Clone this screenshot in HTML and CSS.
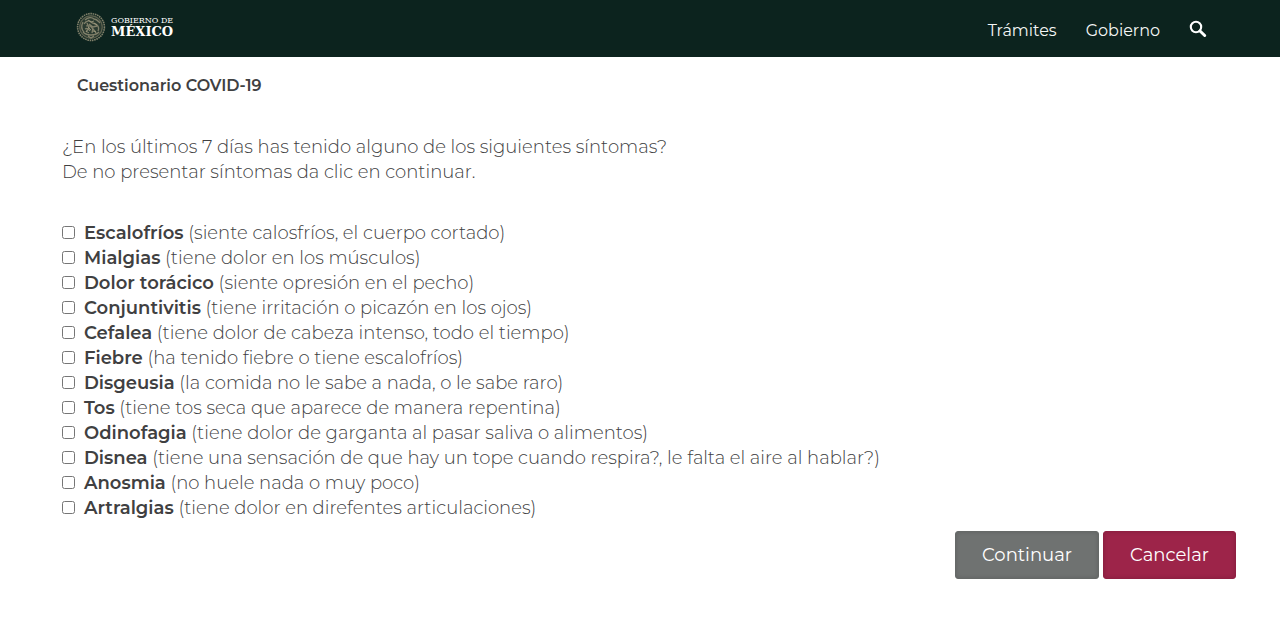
FILE: index.html
```
<!DOCTYPE html>
<html lang="es">
<head>
<meta charset="utf-8">
<meta name="viewport" content="width=device-width, initial-scale=1">
<title>Cuestionario COVID-19</title>
<link rel="stylesheet" href="styles.css">
</head>
<body>
<header class="topbar">
  <a class="brand" href="#">
    <svg class="seal" viewBox="0 0 30 30" aria-hidden="true">
      <circle cx="15" cy="15" r="12" fill="#2b3b31"/>
      <g fill="none" stroke="#81806a">
        <circle cx="15" cy="15" r="13.4" stroke-width="1.6" stroke-dasharray="1.6 .7"/>
        <circle cx="15" cy="15" r="11.2" stroke="#5d614f" stroke-width="1.2"/>
        <path stroke-width="1.3" d="M9 8c3-3 7-3 9-1 3 0 4 2 6 4M8 12c2-3 5-4 7-2s4 1 6 3 2 4 1 6M7 10c-2 4-1 8 1 10M10 14c3-1 5 0 6 2s3 2 4 5M9 17c2-1 4 0 5 2M13 12l4 3 4-1M11 11l2 5-3 4M17 16l-1 5M7 20c4 4 12 4 16 0M10 22c3 1 7 1 10 0M12 24l3 2 3-2"/>
        <path stroke="#a19d80" stroke-width=".8" d="M12 8l3 2 3-1M18 11l3 2M12 15l3 3M17 19l3 1M10 19l3 2"/>
      </g>
    </svg>
    <span class="brand-text"><span class="brand-small">GOBIERNO DE</span><span class="brand-large">MÉXICO</span></span>
  </a>
  <nav class="nav">
    <a href="#">Trámites</a>
    <a href="#">Gobierno</a>
    <a class="search" href="#" aria-label="Buscar">
      <svg viewBox="0 0 18 18" aria-hidden="true"><circle cx="7" cy="7" r="5.2" fill="none" stroke="#fff" stroke-width="2.1"/><path d="M11 11l4.7 4.5" stroke="#fff" stroke-width="3" stroke-linecap="round"/></svg>
    </a>
  </nav>
</header>
<main class="page">
  <h1 class="title">Cuestionario COVID-19</h1>
  <form class="survey">
    <p class="question">¿En los últimos 7 días has tenido alguno de los siguientes síntomas?<br>De no presentar síntomas da clic en continuar.</p>
    <div class="symptoms">
      <label class="symptom"><input type="checkbox"><span><b>Escalofríos</b> (siente calosfríos, el cuerpo cortado)</span></label>
      <label class="symptom"><input type="checkbox"><span><b>Mialgias</b> (tiene dolor en los músculos)</span></label>
      <label class="symptom"><input type="checkbox"><span><b>Dolor torácico</b> (siente opresión en el pecho)</span></label>
      <label class="symptom"><input type="checkbox"><span><b>Conjuntivitis</b> (tiene irritación o picazón en los ojos)</span></label>
      <label class="symptom"><input type="checkbox"><span><b>Cefalea</b> (tiene dolor de cabeza intenso, todo el tiempo)</span></label>
      <label class="symptom"><input type="checkbox"><span><b>Fiebre</b> (ha tenido fiebre o tiene escalofríos)</span></label>
      <label class="symptom"><input type="checkbox"><span><b>Disgeusia</b> (la comida no le sabe a nada, o le sabe raro)</span></label>
      <label class="symptom"><input type="checkbox"><span><b>Tos</b> (tiene tos seca que aparece de manera repentina)</span></label>
      <label class="symptom"><input type="checkbox"><span><b>Odinofagia</b> (tiene dolor de garganta al pasar saliva o alimentos)</span></label>
      <label class="symptom"><input type="checkbox"><span><b>Disnea</b> (tiene una sensación de que hay un tope cuando respira?, le falta el aire al hablar?)</span></label>
      <label class="symptom"><input type="checkbox"><span><b>Anosmia</b> (no huele nada o muy poco)</span></label>
      <label class="symptom"><input type="checkbox"><span><b>Artralgias</b> (tiene dolor en direfentes articulaciones)</span></label>
    </div>
    <div class="actions">
      <button class="btn btn-continue" type="button">Continuar</button>
      <button class="btn btn-cancel" type="button">Cancelar</button>
    </div>
  </form>
</main>
</body>
</html>
```
FILE: styles.css
```
* { box-sizing: border-box; }
body {
  margin: 0;
  background: #fff;
  color: #404041;
  font-family: Montserrat, Inter, sans-serif;
  font-size: 18px;
  line-height: 25px;
}
.topbar {
  display: flex;
  align-items: center;
  justify-content: space-between;
  height: 57px;
  padding: 0 73px 0 76px;
  background: #0c231e;
}
.brand {
  display: flex;
  align-items: center;
  gap: 5px;
  padding-bottom: 3px;
  color: #fff;
  text-decoration: none;
  font-family: "DejaVu Serif", serif;
  font-weight: 700;
}
.seal { width: 30px; height: 30px; }
.brand-text { display: flex; flex-direction: column; padding-top: 1px; }
.brand-small { font-size: 8px; line-height: 9px; font-weight: 400; }
.brand-large { font-size: 13px; line-height: 14px; }
.nav {
  display: flex;
  align-items: center;
  gap: 29px;
  padding-top: 3px;
  font-size: 16px;
}
.nav a { color: #f4f6f5; text-decoration: none; }
.search { display: flex; padding-bottom: 3px; }
.search svg { width: 18px; height: 18px; }
.page { padding: 16px 44px 32px 62px; }
.title {
  margin: 0 0 37px;
  padding-left: 15px;
  color: #404041;
  font-size: 16px;
  line-height: 25px;
  font-weight: 600;
}
.question { margin: 0 0 36px; font-weight: 300; }
.symptoms { display: flex; flex-direction: column; align-items: flex-start; font-weight: 300; }
.symptom { display: flex; align-items: flex-start; gap: 9px; }
.symptom input {
  flex: none;
  width: 13px;
  height: 13px;
  margin: 5px 0 0;
}
.symptom b { color: #404041; font-weight: 600; }
.actions { display: flex; justify-content: flex-end; gap: 4px; padding-top: 10px; }
.btn {
  height: 48px;
  padding: 0 26px;
  border: 1px solid;
  border-radius: 3px;
  color: #fff;
  font: inherit;
  box-shadow: inset 0 0 4px rgba(0, 0, 0, .15);
}
.btn-continue { background: #6f7271; border-color: #666968; }
.btn-cancel { background: #9d2449; border-color: #901f42; }
```
